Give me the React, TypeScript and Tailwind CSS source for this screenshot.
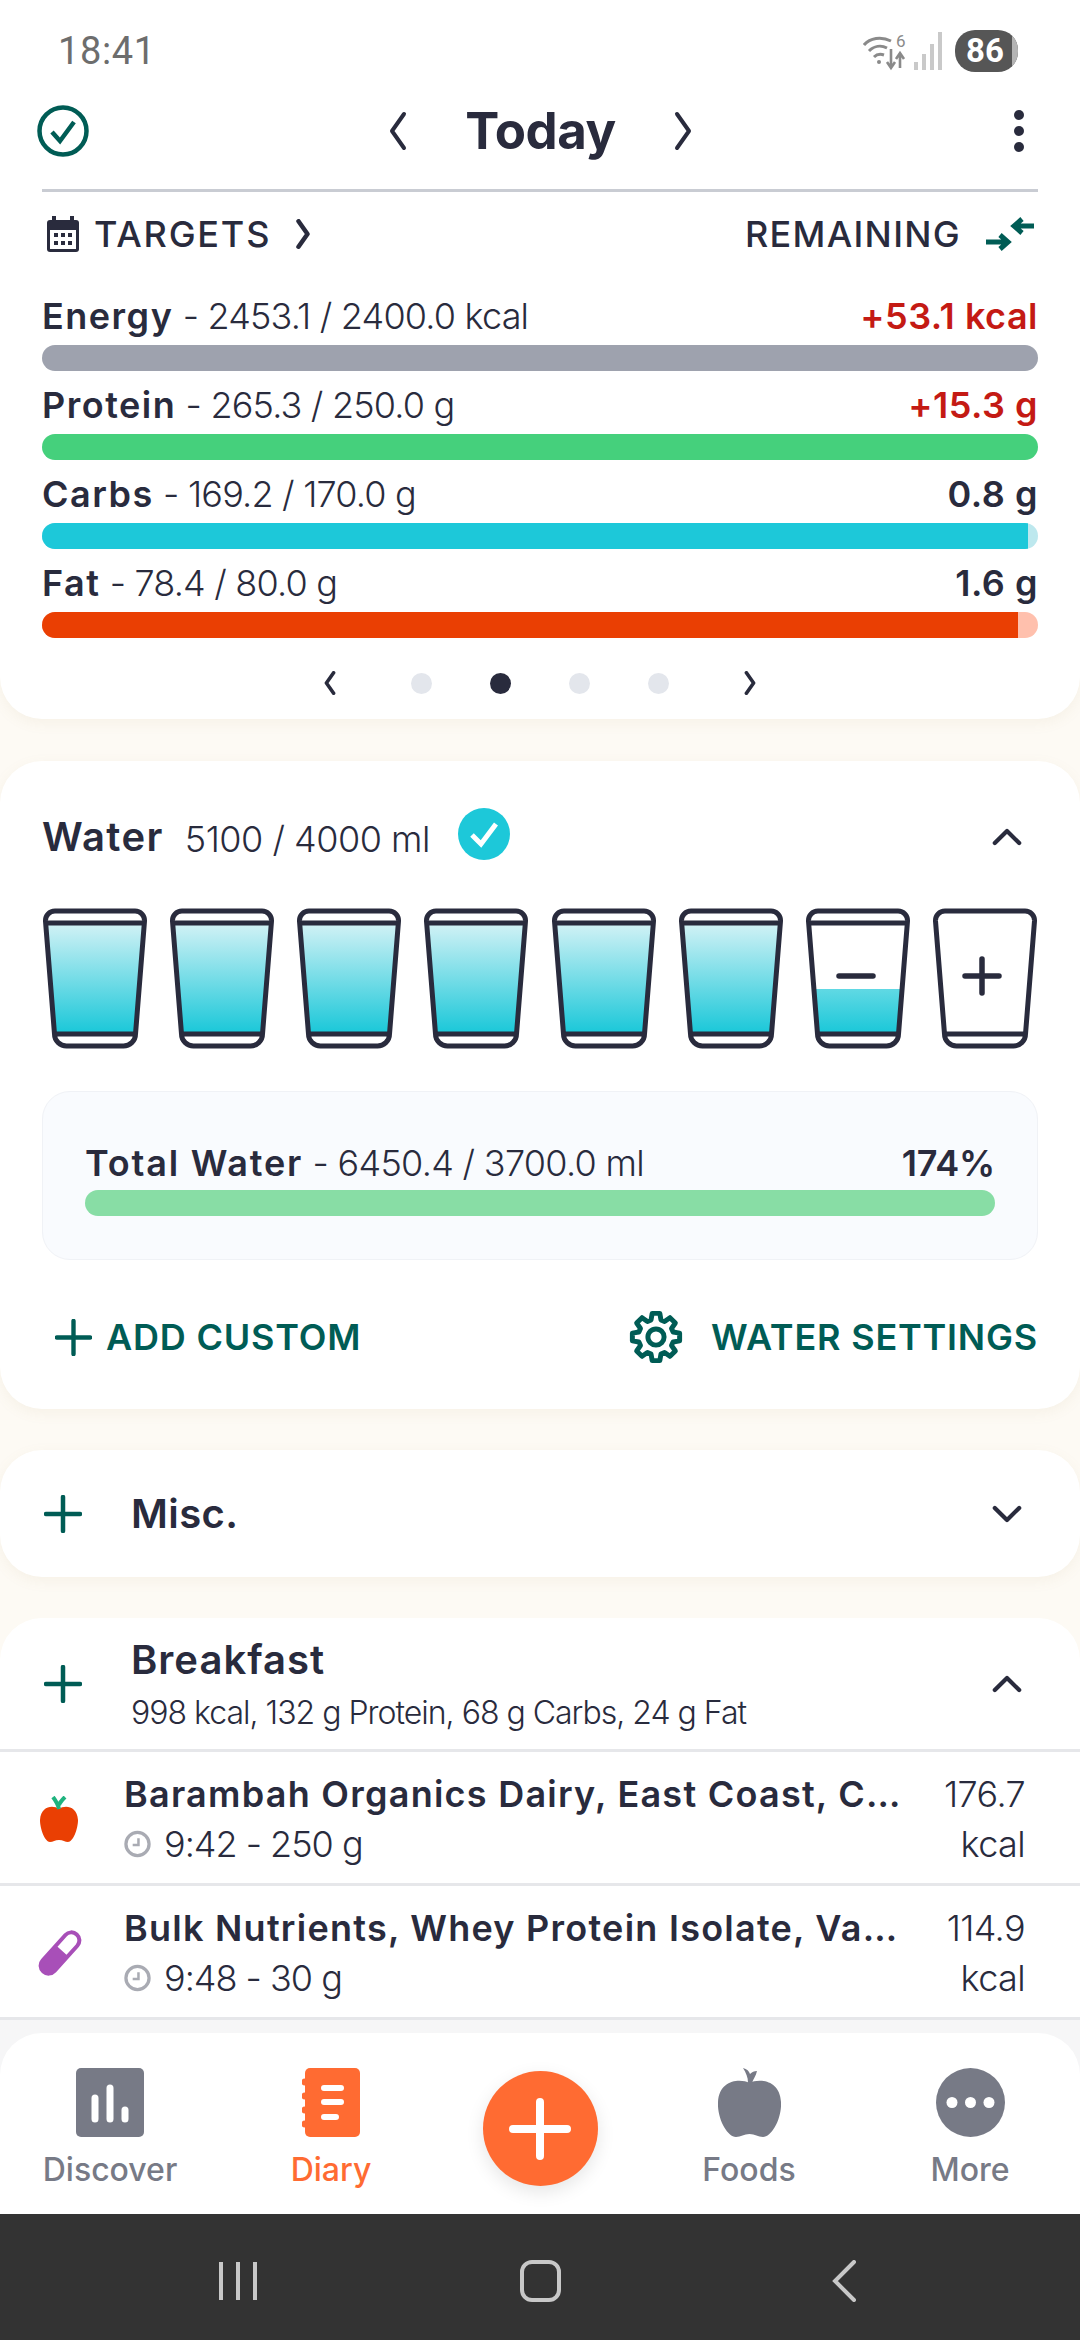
import React from "react";

const Chevron = ({ d, className }: { d: "l" | "r" | "u" | "d"; className?: string }) => {
  const p = { l: "M17 3 L5 20 L17 37", r: "M5 3 L17 20 L5 37", u: "M3 17 L16 4 L29 17", d: "M3 4 L16 17 L29 4" }[d];
  const vb = d === "l" || d === "r" ? "0 0 22 40" : "0 0 32 21";
  return (
    <svg viewBox={vb} className={className} fill="none" stroke="currentColor" strokeLinecap="round" strokeLinejoin="round" strokeWidth={d === "u" || d === "d" ? 4.5 : 4}>
      <path d={p} />
    </svg>
  );
};

const Plus = ({ className }: { className?: string }) => (
  <svg viewBox="0 0 38 38" className={className} fill="none" stroke="currentColor" strokeWidth="4.5" strokeLinecap="round">
    <path d="M19 2V36M2 19H36" />
  </svg>
);

const Macro = ({ name, val, right, red, color, end, endW }: { name: string; val: string; right: string; red?: boolean; color: string; end?: string; endW?: number }) => (
  <div className="flex flex-col">
    <div className="flex h-[63px] items-center justify-between pt-[5px] text-[36px]">
      <span className="whitespace-nowrap">
        <span className="font-semibold tracking-[1.5px]">{name}</span>
        <span className="font-light tracking-[-0.8px]"> - {val}</span>
      </span>
      <span className={red ? "font-semibold tracking-[0.5px] text-[#c41a14]" : "font-semibold tracking-[0.5px]"}>{right}</span>
    </div>
    <div className="flex h-[26px] overflow-hidden rounded-full" style={{ background: end ?? color }}>
      <div className="h-full flex-1" style={{ background: color, marginRight: endW ?? 0 }} />
    </div>
  </div>
);

const Glass = ({ fill, id, symbol }: { fill: "full" | "part" | "none"; id: string; symbol?: "minus" | "plus" }) => (
  <svg viewBox="0 0 106 141" className="h-[141px] w-[106px]" fill="none">
    <defs>
      <linearGradient id={id} gradientUnits="userSpaceOnUse" x1="0" y1={fill === "part" ? 80 : 17} x2="0" y2="124">
        <stop offset="0" stopColor={fill === "part" ? "#62d9e4" : "#cff1f5"} />
        <stop offset="1" stopColor="#1cc8d9" />
      </linearGradient>
    </defs>
    {fill === "full" && <path d="M5 17H101L93 124H13Z" fill={`url(#${id})`} />}
    {fill === "part" && <path d="M10 81H96L93 124H13Z" fill={`url(#${id})`} />}
    <path d="M13 3H93A9.5 9.5 0 0 1 102.5 13L93.5 126A12 12 0 0 1 81 138H25A12 12 0 0 1 12.5 126L3.5 13A9.5 9.5 0 0 1 13 3Z" stroke="#292b3d" strokeWidth="5" />
    {fill !== "none" && <path d="M4 15H102" stroke="#292b3d" strokeWidth="5" />}
    <path d="M12 126H94" stroke="#292b3d" strokeWidth="5" />
    {symbol === "minus" && <path d="M34 68H68" stroke="#292b3d" strokeWidth="5.5" strokeLinecap="round" />}
    {symbol === "plus" && <path d="M33 68H67M50 51V85" stroke="#292b3d" strokeWidth="5.5" strokeLinecap="round" />}
  </svg>
);

const Clock = () => (
  <svg viewBox="0 0 28 28" className="h-[28px] w-[27px] shrink-0" fill="none" stroke="#a9abb3" strokeWidth="3.4">
    <circle cx="14" cy="14" r="12" />
    <path d="M15 8V15H9" strokeWidth="2.6" />
  </svg>
);

const FoodRow = ({ icon, name, time, kcal }: { icon: React.ReactNode; name: string; time: string; kcal: string }) => (
  <div className="flex h-[134px] items-center border-b-[3px] border-[#e6e7ea] pt-[2px] pr-[55px]">
    <div className="flex w-[124px] shrink-0 justify-start pl-[37px]">{icon}</div>
    <div className="flex min-w-0 flex-1 flex-col gap-[10px]">
      <div className="text-[36px] leading-[40px] font-semibold tracking-[1.25px] whitespace-nowrap">{name}</div>
      <div className="flex h-[40px] items-center gap-[13px] text-[36px] font-light tracking-[-1px]">
        <Clock />
        {time}
      </div>
    </div>
    <div className="flex flex-col gap-[10px] text-right text-[36px] leading-[40px] font-light tracking-[-0.6px]">
      <div>{kcal}</div>
      <div>kcal</div>
    </div>
  </div>
);

const NavItem = ({ label, icon, active, w }: { label: string; icon: React.ReactNode; active?: boolean; w: string }) => (
  <div className={`flex ${w} flex-col items-center`}>
    <div className="flex h-[69px] items-center justify-center">{icon}</div>
    <div className={`mt-[14px] text-[32px] leading-[38px] font-medium ${active ? "text-[#ff6b32]" : "text-[#777a86]"}`}>{label}</div>
  </div>
);

export default function App() {
  return (
    <div className="flex h-[2340px] w-[1080px] flex-col overflow-hidden bg-[#fdfaf4] text-[#292b3d] [font-family:Inter,'Liberation_Sans',sans-serif]">
      <div className="flex min-h-0 flex-1 flex-col">
        {/* Top card */}
        <section className="h-[719px] shrink-0 rounded-b-[42px] bg-white shadow-[0_4px_14px_rgba(160,140,90,0.08)]">
          <div className="flex h-[100px] items-center justify-between pt-[2px] pr-[62px] pl-[58px]">
            <span className="text-[38px] font-normal tracking-[0.6px] text-[#6d6d6d] [font-family:Roboto,sans-serif]">18:41</span>
            <div className="flex items-center">
              <svg viewBox="0 0 44 42" className="h-[42px] w-[44px]" fill="none" stroke="#8a8a8a" strokeWidth="3">
                <path d="M1 15C7 8 18 6 28 11M6 21C11 16 18 15 24 18M11 27C14 24 18 24 21 25" />
                <circle cx="16" cy="32" r="2" fill="#8a8a8a" stroke="none" />
                <path d="M28 19V37M24 32L28 38L32 32M37 38V24M33 29L37 23L41 29" strokeWidth="2.6" />
                <text x="33" y="17" fontSize="17" fill="#8a8a8a" stroke="none" fontFamily="Roboto">6</text>
              </svg>
              <svg viewBox="0 0 30 40" className="ml-[6px] h-[40px] w-[30px]" fill="#c9c9c9">
                <rect x="1" y="31" width="4" height="8" />
                <rect x="9" y="23" width="4" height="16" />
                <rect x="17" y="13" width="4" height="26" />
                <rect x="25" y="1" width="4" height="38" />
              </svg>
              <div className="relative ml-[12px] flex h-[42px] w-[63px] items-center justify-center overflow-hidden rounded-[20px] bg-[#565656] pr-[3px] text-[33px] font-bold text-white [font-family:Roboto,sans-serif]">
                86
                <div className="absolute top-0 right-0 h-full w-[6px] bg-[#b4b4b4]" />
              </div>
            </div>
          </div>
          <div className="relative flex h-[61px] items-center justify-between pr-[56px] pl-[37px]">
            <svg viewBox="0 0 52 52" className="h-[52px] w-[52px] text-[#005c55]" fill="none" stroke="currentColor" strokeWidth="4.5">
              <circle cx="26" cy="26" r="23.5" />
              <path d="M15 27L23 36L37 17" strokeWidth="4.5" />
            </svg>
            <div className="mr-[22px] flex items-center gap-[55px]">
              <Chevron d="l" className="h-[40px] w-[24px]" />
              <span className="text-[51px] leading-[60px] font-bold tracking-[-0.5px]">Today</span>
              <Chevron d="r" className="h-[40px] w-[24px]" />
            </div>
            <div className="flex flex-col gap-[6px]">
              <div className="h-[10px] w-[10px] rounded-full bg-[#292b3d]" />
              <div className="h-[10px] w-[10px] rounded-full bg-[#292b3d]" />
              <div className="h-[10px] w-[10px] rounded-full bg-[#292b3d]" />
            </div>
          </div>
          <div className="mx-[42px] mt-[28px] h-[3px] bg-[#c9ccd3]" />
          <div className="flex h-[83px] items-center justify-between pr-[46px] pl-[47px] text-[36px] font-medium">
            <div className="flex items-center">
              <svg viewBox="0 0 32 36" className="h-[36px] w-[32px]" fill="#292b3d">
                <rect x="5" y="0" width="4" height="7" />
                <rect x="23" y="0" width="4" height="7" />
                <rect x="0" y="4" width="32" height="32" rx="3" />
                <rect x="3" y="14" width="26" height="19" fill="#fff" />
                <g fill="#292b3d">
                  <rect x="7" y="17" width="4" height="4" />
                  <rect x="14" y="17" width="4" height="4" />
                  <rect x="21" y="17" width="4" height="4" />
                  <rect x="7" y="25" width="4" height="4" />
                  <rect x="14" y="25" width="4" height="4" />
                  <rect x="21" y="25" width="4" height="4" />
                </g>
              </svg>
              <span className="ml-[15px] tracking-[1.8px]">TARGETS</span>
              <Chevron d="r" className="ml-[23px] h-[30px] w-[18px] [&_path]:[stroke-width:6]" />
            </div>
            <div className="flex items-center gap-[25px]">
              <span className="tracking-[1.3px]">REMAINING</span>
              <svg viewBox="0 0 48 34" className="h-[34px] w-[48px]" fill="none" stroke="#005c55" strokeWidth="5">
                <path d="M48 9H30M36 2L28 9L36 16" />
                <path d="M0 25H20M14 18L22 25L14 32" />
              </svg>
            </div>
          </div>
          <div className="mt-[7px] flex flex-col px-[42px]">
            <Macro name="Energy" val="2453.1 / 2400.0 kcal" right="+53.1 kcal" red color="#9ea2ae" />
            <Macro name="Protein" val="265.3 / 250.0 g" right="+15.3 g" red color="#45d07c" />
            <Macro name="Carbs" val="169.2 / 170.0 g" right="0.8 g" color="#1dc8d9" end="#bde8ee" endW={10} />
            <Macro name="Fat" val="78.4 / 80.0 g" right="1.6 g" color="#ea3f03" end="#ffc0ad" endW={20} />
          </div>
          <div className="mt-[33px] flex items-center justify-center">
            <Chevron d="l" className="h-[24px] w-[14px] [&_path]:[stroke-width:6]" />
            <div className="mr-[58px] ml-[74px] flex items-center gap-[58px]">
              <div className="h-[21px] w-[21px] rounded-full bg-[#e3e6ec]" />
              <div className="h-[21px] w-[21px] rounded-full bg-[#292b3d]" />
              <div className="h-[21px] w-[21px] rounded-full bg-[#e3e6ec]" />
              <div className="h-[21px] w-[21px] rounded-full bg-[#e3e6ec]" />
            </div>
            <Chevron d="r" className="ml-[16px] h-[24px] w-[14px] [&_path]:[stroke-width:6]" />
          </div>
        </section>

        {/* Water */}
        <section className="mt-[42px] h-[648px] shrink-0 rounded-[42px] bg-white shadow-[0_4px_14px_rgba(160,140,90,0.08)]">
          <div className="flex items-center justify-between pt-[47px] pr-[58px] pl-[42px]">
            <div className="flex items-center">
              <span className="text-[40px] leading-[52px] font-semibold tracking-[1.4px]">Water</span>
              <span className="mt-[4px] ml-[21px] text-[36px] font-light tracking-[-0.5px]">5100 / 4000 ml</span>
              <svg viewBox="0 0 52 52" className="mb-[6px] ml-[28px] h-[52px] w-[52px]">
                <circle cx="26" cy="26" r="26" fill="#1dc8d9" />
                <path d="M14 27L23 36L38 16" fill="none" stroke="#fff" strokeWidth="5" />
              </svg>
            </div>
            <Chevron d="u" className="h-[20px] w-[30px]" />
          </div>
          <div className="mt-[42px] flex justify-between px-[42px]">
            {[0, 1, 2, 3, 4, 5].map((i) => (
              <Glass key={i} id={`glass-${i}`} fill="full" />
            ))}
            <Glass id="glass-6" fill="part" symbol="minus" />
            <Glass id="glass-7" fill="none" symbol="plus" />
          </div>
          <div className="mx-[42px] mt-[42px] flex h-[169px] flex-col rounded-[28px] border border-[#f0f2f6] bg-[#f9fbfe] px-[42px] pt-[44px]">
            <div className="flex h-[54px] items-center justify-between text-[36px]">
              <span className="whitespace-nowrap">
                <span className="font-semibold tracking-[1.8px]">Total Water</span>
                <span className="font-light tracking-[-0.7px]"> - 6450.4 / 3700.0 ml</span>
              </span>
              <span className="font-semibold tracking-[-0.2px]">174%</span>
            </div>
            <div className="h-[26px] rounded-full bg-[#88dda5]" />
          </div>
          <div className="mt-[50px] flex items-center justify-between pr-[42px] pl-[55px] text-[36px] font-semibold tracking-[0.8px] text-[#005c55]">
            <div className="flex items-center gap-[14px]">
              <Plus className="h-[37px] w-[37px]" />
              <span>ADD CUSTOM</span>
            </div>
            <div className="flex items-center gap-[28px]">
              <svg viewBox="0 0 24 24" className="h-[54px] w-[54px]" fill="none" stroke="#005c55" strokeWidth="2.2" strokeLinejoin="round">
                <path d="M10.3 1.5h3.4l.5 2.9 1.6.7 2.4-1.7 2.4 2.4-1.7 2.4.7 1.6 2.9.5v3.4l-2.9.5-.7 1.6 1.7 2.4-2.4 2.4-2.4-1.7-1.6.7-.5 2.9h-3.4l-.5-2.9-1.6-.7-2.4 1.7-2.4-2.4 1.7-2.4-.7-1.6-2.9-.5v-3.4l2.9-.5.7-1.6-1.7-2.4 2.4-2.4 2.4 1.7 1.6-.7z" />
                <circle cx="12" cy="12" r="3.6" />
              </svg>
              <span>WATER SETTINGS</span>
            </div>
          </div>
        </section>

        {/* Misc */}
        <section className="mt-[41px] flex h-[127px] shrink-0 items-center justify-between rounded-[42px] bg-white pr-[58px] pl-[44px] shadow-[0_4px_14px_rgba(160,140,90,0.08)]">
          <div className="flex items-center gap-[49px]">
            <Plus className="h-[38px] w-[38px] text-[#005c55]" />
            <span className="text-[40px] font-semibold tracking-[0.4px]">Misc.</span>
          </div>
          <Chevron d="d" className="h-[20px] w-[30px]" />
        </section>

        {/* Breakfast */}
        <section className="mt-[41px] shrink-0 rounded-t-[42px] bg-white">
          <div className="flex h-[134px] items-center justify-between border-b-[3px] border-[#e6e7ea] pr-[58px] pl-[44px]">
            <div className="flex items-center gap-[49px]">
              <Plus className="h-[38px] w-[38px] text-[#005c55]" />
              <div className="flex flex-col">
                <span className="text-[40px] leading-[50px] font-semibold tracking-[1px]">Breakfast</span>
                <span className="mt-[8px] text-[32px] leading-[40px] font-light tracking-[-1px]">998 kcal, 132 g Protein, 68 g Carbs, 24 g Fat</span>
              </div>
            </div>
            <Chevron d="u" className="h-[20px] w-[30px]" />
          </div>
          <FoodRow
            name="Barambah Organics Dairy, East Coast, C…"
            time="9:42 - 250 g"
            kcal="176.7"
            icon={
              <svg viewBox="0 0 38 46" className="ml-[3px] h-[46px] w-[38px]">
                <path d="M19 13C24 9 37 9 38 24C38 33 33 46 28 46C25 46 23 44 19 44C15 44 13 46 10 46C5 46 0 33 0 24C1 9 14 9 19 13Z" fill="#ea3f03" />
                <path d="M19 13C18 8 16 5 13 1M19 9C20 6 22 4 25 1" fill="none" stroke="#1fb37f" strokeWidth="4" />
              </svg>
            }
          />
          <FoodRow
            name="Bulk Nutrients, Whey Protein Isolate, Va…"
            time="9:48 - 30 g"
            kcal="114.9"
            icon={
              <svg viewBox="0 0 46 46" className="h-[46px] w-[46px]">
                <g transform="rotate(42 23 23)">
                  <rect x="13" y="-4" width="20" height="54" rx="10" fill="#a84fb8" />
                  <path d="M17 20V6A6 6 0 0 1 29 6V20Z" fill="#fff" />
                </g>
              </svg>
            }
          />
        </section>
        <div className="min-h-0 flex-1 bg-[#f6f6f7]" />
      </div>

      {/* Bottom nav */}
      <div className="shrink-0 bg-[#f6f6f7]">
        <nav className="flex h-[181px] items-start rounded-t-[42px] bg-white pt-[35px]">
          <NavItem
            w="w-[220px]"
            label="Discover"
            icon={
              <svg viewBox="0 0 68 69" className="h-[69px] w-[68px]">
                <rect width="68" height="69" rx="5" fill="#777a86" />
                <path d="M19 30V51M34 20V51M49 42V51" stroke="#fff" strokeWidth="7" strokeLinecap="round" />
              </svg>
            }
          />
          <NavItem
            w="w-[222px]"
            active
            label="Diary"
            icon={
              <svg viewBox="0 0 58 69" className="h-[69px] w-[58px]">
                <rect x="3" width="55" height="69" rx="5" fill="#ff6b32" />
                <g fill="#ff6b32">
                  <circle cx="3" cy="14" r="3.5" />
                  <circle cx="3" cy="28" r="3.5" />
                  <circle cx="3" cy="42" r="3.5" />
                  <circle cx="3" cy="56" r="3.5" />
                </g>
                <path d="M22 20H39M22 34H39M22 49H34" stroke="#fff" strokeWidth="6" strokeLinecap="round" />
              </svg>
            }
          />
          <div className="flex w-[196px] justify-center">
            <div className="mt-[3px] flex h-[115px] w-[115px] items-center justify-center rounded-full bg-[#ff6b32] text-white shadow-[0_6px_18px_rgba(0,0,0,0.1)]">
              <svg viewBox="0 0 62 62" className="h-[62px] w-[62px]" fill="none" stroke="#fff" strokeWidth="8" strokeLinecap="round">
                <path d="M31 4V58M4 31H58" />
              </svg>
            </div>
          </div>
          <NavItem
            w="w-[222px]"
            label="Foods"
            icon={
              <svg viewBox="0 0 63 69" className="h-[69px] w-[63px]">
                <path d="M31.5 15C41 10 62 12 63 34C64 50 54 69 45 69C40 69 37 66 31.5 66C26 66 23 69 18 69C9 69 -1 50 0 34C1 12 22 10 31.5 15Z" fill="#777a86" />
                <path d="M30 15C30 9 28 5 25 0C29 1 31 3 32 6C34 4 36 3 39 3C38 8 35 11 34 15Z" fill="#777a86" />
              </svg>
            }
          />
          <NavItem
            w="w-[220px]"
            label="More"
            icon={
              <svg viewBox="0 0 69 69" className="h-[69px] w-[69px]">
                <circle cx="34.5" cy="34.5" r="34.5" fill="#777a86" />
                <circle cx="16" cy="34.5" r="5.5" fill="#fff" />
                <circle cx="34.5" cy="34.5" r="5.5" fill="#fff" />
                <circle cx="53" cy="34.5" r="5.5" fill="#fff" />
              </svg>
            }
          />
        </nav>
      </div>

      {/* System bar */}
      <div className="flex h-[126px] shrink-0 items-center justify-between bg-[#333333] pt-[8px] pr-[224px] pl-[218px]">
        <svg viewBox="0 0 40 42" className="h-[42px] w-[40px]" stroke="#c8c8c8" strokeWidth="4">
          <path d="M3 2V40M20 2V40M37 2V40" />
        </svg>
        <div className="mr-[10px] h-[42px] w-[41px] rounded-[12px] border-[4px] border-[#c8c8c8]" />
        <svg viewBox="0 0 24 42" className="h-[42px] w-[24px]" fill="none" stroke="#c8c8c8" strokeWidth="4" strokeLinecap="round">
          <path d="M22 2L3 21L22 40" />
        </svg>
      </div>
    </div>
  );
}
